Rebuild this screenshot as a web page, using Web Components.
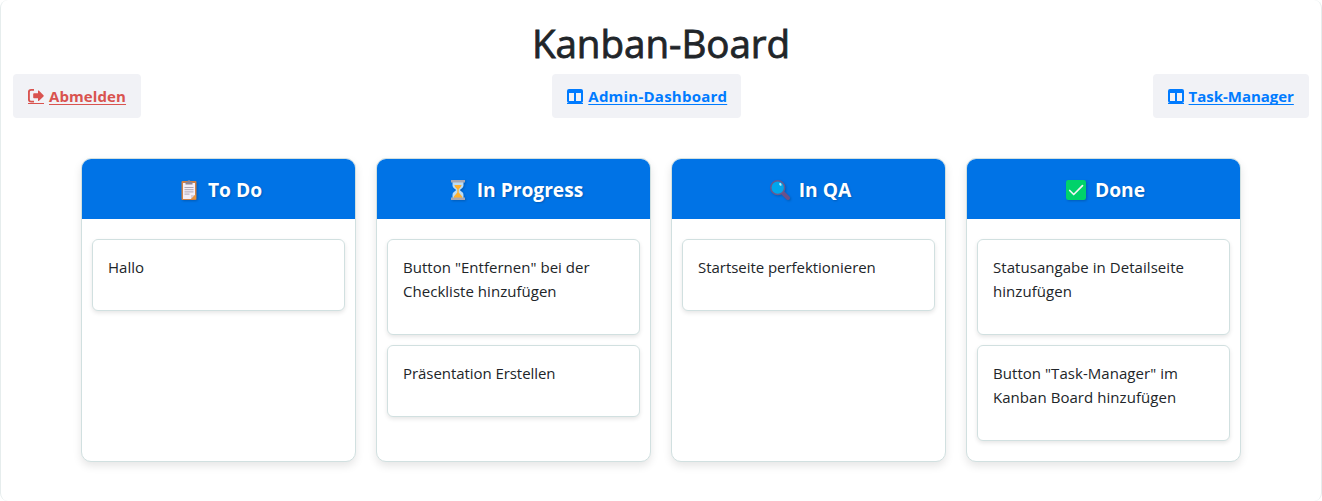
<!DOCTYPE html>
<html lang="de">
<head>
<meta charset="utf-8">
<title>Kanban-Board</title>
<style>
html,body{margin:0;height:100%;overflow:hidden;background:#fff}
body{font:400 16px/24px "Open Sans","Noto Sans",sans-serif;color:#212529}
</style>
</head>
<body>
<kanban-page>
  <nav-link slot="nav" kind="exit" style="--w:128px;--ls:.1px">Abmelden</nav-link>
  <nav-link slot="nav" kind="board" style="--w:189px;--ls:.23px">Admin-Dashboard</nav-link>
  <nav-link slot="nav" kind="board" style="--w:156.4px;--ls:-.03px">Task-Manager</nav-link>
  <kanban-column icon="clipboard" label="To Do">
    <task-card>Hallo</task-card>
  </kanban-column>
  <kanban-column icon="hourglass" label="In Progress">
    <task-card>Button "Entfernen" bei der<br>Checkliste hinzufügen</task-card>
    <task-card style="--card:-.06px">Präsentation Erstellen</task-card>
  </kanban-column>
  <kanban-column icon="lens" label="In QA">
    <task-card style="--card:-.04px">Startseite perfektionieren</task-card>
  </kanban-column>
  <kanban-column icon="check" label="Done">
    <task-card style="--card:.05px">Statusangabe in Detailseite<br>hinzufügen</task-card>
    <task-card style="--card:.05px">Button "Task-Manager" im<br>Kanban Board hinzufügen</task-card>
  </kanban-column>
</kanban-page>
<script>
const icons = {
  exit: '<svg viewBox="0 0 16 16"><path d="M6 1.9H3.1Q.9 1.9.9 4.1v7.3q0 2.2 2.2 2.2H6" fill="none" stroke="currentColor" stroke-width="1.9"/><path d="M5.2 6.1q0-.8.8-.8h4V3q0-.8.8-.4l4.7 4.6q.5.6 0 1.2l-4.7 4.5q-.8.5-.8-.4v-2.3H6q-.8 0-.8-.8z" fill="currentColor"/></svg>',
  board: '<svg viewBox="0 0 16 16"><path fill="currentColor" fill-rule="evenodd" d="M2 1h12q2 0 2 2v10q0 2-2 2H2q-2 0-2-2V3q0-2 2-2zm0 4v8h5V5zm7 0v8h5V5z"/></svg>',
  clipboard: '<svg viewBox="0 0 20 20"><rect x="2.5" y="1" width="15" height="19" rx="1" fill="#ce8045"/><path d="M4 3h12v12l-4 4H4z" fill="#f3eef8"/><path d="M12 19v-4h4z" fill="#d5cede"/><path d="M12 19l5-5v5z" fill="#e6923e"/><path d="M6.5 2h2q0-2 1.5-2t1.5 2h2v2.5h-7z" fill="#8c8494"/><path d="M5.5 7.5h9m-9 2.2h9m-9 2.2h9m-9 2.2h5" stroke="#a69dac" stroke-width=".9"/></svg>',
  hourglass: '<svg viewBox="0 0 20 20"><path d="M4.5 2h11v3.5q0 2-3.7 4.5 3.7 2.5 3.7 5V18h-11v-3q0-2.500 3.700-5-3.700-2.500-3.700-4.500z" fill="#b9dcf8"/><path d="M6.300 5h7.400q-.5 2-3 4.200v3.300l3.500 4v1.500H5.800v-1.500l3.500-4V9.200Q6.500 7 6.300 5z" fill="#ffb02e"/><path d="M3 0h14v2.500H3zM3 17.500h14V20H3z" fill="#a9a9b4"/></svg>',
  lens: '<svg viewBox="0 0 20 20"><path d="M13 13l5 5" stroke="#69518b" stroke-width="4" stroke-linecap="round"/><circle cx="7.700" cy="7.700" r="6.900" fill="#00a6ed" stroke="#69598f" stroke-width="1.500"/><ellipse cx="10.200" cy="4.500" rx="1.100" ry="1.500" fill="#b8efff" transform="rotate(-25 10 4)"/></svg>',
  check: '<svg viewBox="0 0 20 20"><rect width="20" height="20" rx="2.300" fill="#00d26a"/><path d="M3.700 10.500l4 4 8.800-8.800" fill="none" stroke="#f4f4f4" stroke-width="1.700" stroke-linecap="round" stroke-linejoin="round"/></svg>'
};
class Part extends HTMLElement {
  constructor() { super(); this.attachShadow({mode: 'open'}); }
  connectedCallback() { this.shadowRoot.innerHTML = this.view(); }
}
customElements.define('kanban-page', class extends Part {
  view() { return `<style>
    :host{display:block;box-sizing:border-box;height:501px;border:solid #e6eded;border-width:0 1px;border-radius:8px;padding:20px 12px 0;background:#fff}
    h1{margin:0 0 8px;font-size:38.6px;line-height:46px;font-weight:400;text-align:center;letter-spacing:-.05px;-webkit-text-stroke:.8px currentColor}
    nav{display:flex;justify-content:space-between;height:44px}
    main{display:grid;grid-template-columns:repeat(4,275px);justify-content:center;gap:20px;margin-top:40px;height:304px}
  </style><h1>Kanban-Board</h1><nav><slot name="nav"></slot></nav><main><slot></slot></main>`; }
});
customElements.define('nav-link', class extends Part {
  view() { return `<style>
    :host{display:flex;box-sizing:border-box;width:var(--w);padding:10px 0 10px 15px;border-radius:4px;background:#f1f2f6;color:#007bff;font-weight:700;white-space:nowrap}
    :host([kind=exit]){color:#d9534f}
    i{width:16px;height:16px;margin:4px 5px 0 0;background:linear-gradient(currentColor,currentColor) 0 100%/100% 1px no-repeat}
    svg{width:16px;height:16px;display:block}
    a{letter-spacing:var(--ls);font-size:15px;text-decoration:underline;text-decoration-thickness:1px;text-underline-offset:2px;text-decoration-skip-ink:none}
  </style><i>${icons[this.getAttribute('kind')]}</i><a><slot></slot></a>`; }
});
customElements.define('kanban-column', class extends Part {
  view() { return `<style>
    :host{display:flex;flex-direction:column;box-sizing:border-box;border:1px solid #d1e0e0;border-radius:10px;overflow:hidden;background:#fff;box-shadow:0 4px 8px rgba(0,0,0,.1)}
    header{display:flex;justify-content:center;align-items:center;box-sizing:border-box;height:60px;padding:2px 0 0 4px;gap:9px;background:#0073e6;color:#fff;font-size:19.2px;font-weight:700;text-shadow:1px 1px 2px rgba(0,0,0,.2)}
    svg{width:20px;height:20px;display:block;filter:drop-shadow(1px 1px 1px rgba(0,0,0,.2))}
    div{display:flex;flex-direction:column;gap:10px;padding:20px 10px}
  </style><header>${icons[this.getAttribute('icon')]}<span>${this.getAttribute('label')}</span></header><div><slot></slot></div>`; }
});
customElements.define('task-card', class extends Part {
  view() { return `<style>
    :host{display:block;padding:15px 15px 31px;border:1px solid #d1e0e0;border-radius:6px;background:#fff;box-shadow:0 2px 4px rgba(0,0,0,.1);font-size:15px;letter-spacing:var(--card,.03px);white-space:nowrap}
  </style><slot></slot>`; }
});
</script>
</body>
</html>
